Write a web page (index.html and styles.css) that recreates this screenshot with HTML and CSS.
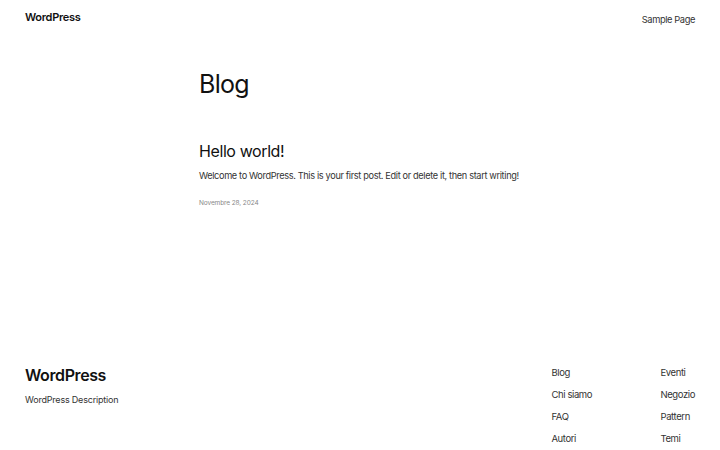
FILE: index.html
```html
<!DOCTYPE html>
<html lang="it">
<head>
  <meta charset="UTF-8">
  <meta name="viewport" content="width=device-width, initial-scale=1.0">
  <title>Blog – WordPress</title>
  <link rel="stylesheet" href="styles.css">
</head>
<body>

  <!-- Header -->
  <header class="site-header">
    <a class="site-title" href="#">WordPress</a>
    <nav class="site-nav">
      <a href="#">Sample Page</a>
    </nav>
  </header>

  <!-- Main -->
  <main class="site-main">
    <h1 class="page-title">Blog</h1>

    <article class="post">
      <h2 class="post-title"><a href="#">Hello world!</a></h2>
      <p class="post-excerpt">Welcome to WordPress. This is your first post. Edit or delete it, then start writing!</p>
      <div class="post-date">Novembre 28, 2024</div>
    </article>
  </main>

  <!-- Footer -->
  <footer class="site-footer">
    <div class="footer-brand">
      <a class="footer-title" href="#">WordPress</a>
      <p class="footer-desc">WordPress Description</p>
    </div>
    <div class="footer-links">
      <ul class="link-col">
        <li><a href="#">Blog</a></li>
        <li><a href="#">Chi siamo</a></li>
        <li><a href="#">FAQ</a></li>
        <li><a href="#">Autori</a></li>
      </ul>
      <ul class="link-col">
        <li><a href="#">Eventi</a></li>
        <li><a href="#">Negozio</a></li>
        <li><a href="#">Pattern</a></li>
        <li><a href="#">Temi</a></li>
      </ul>
    </div>
  </footer>

</body>
</html>
```

FILE: styles.css
```css
body {
  font-family: Inter, "Noto Sans", sans-serif;
  background-color: #ffffff;
  color: #111111;
  margin: 0;
  padding: 0;
  height: 450px;
  overflow: hidden;
  display: flex;
  flex-direction: column;
}

a {
  color: inherit;
  text-decoration: none;
}

/* Header */
.site-header {
  display: flex;
  justify-content: space-between;
  align-items: center;
  padding: 9px 25px 0 25px;
  height: 16px;
}

.site-title {
  font-size: 11px;
  font-weight: 600;
  letter-spacing: -0.3px;
}

.site-nav a {
  font-size: 9.3px;
  letter-spacing: -0.4px;
  color: #333;
}

/* Main */
.site-main {
  width: 322px;
  margin: 0 auto;
  padding-top: 42px;
  flex: 1;
}

.page-title {
  font-size: 25px;
  font-weight: 400;
  letter-spacing: -0.7px;
  margin: 0;
  line-height: 34px;
}

.post {
  margin-top: 39px;
}

.post-title {
  font-size: 16px;
  font-weight: 400;
  letter-spacing: -0.4px;
  margin: 0;
  line-height: 22px;
}

.post-excerpt {
  font-size: 9.2px;
  letter-spacing: -0.35px;
  white-space: nowrap;
  color: #333;
  margin: 7px 0 0 0;
  line-height: 14px;
}

.post-date {
  font-size: 6.5px;
  letter-spacing: -0.1px;
  color: #888;
  margin-top: 16px;
}

/* Footer */
.site-footer {
  display: flex;
  justify-content: space-between;
  padding: 0 25px;
  height: 100px;
}

.footer-title {
  display: block;
  font-size: 16px;
  font-weight: 600;
  letter-spacing: -0.4px;
  margin-top: 15px;
}

.footer-desc {
  font-size: 9px;
  letter-spacing: -0.2px;
  color: #333;
  margin: 9px 0 0 0;
}

.footer-links {
  display: grid;
  grid-template-columns: 109px auto;
  padding-top: 16px;
}

.link-col {
  list-style: none;
  margin: 0;
  padding: 0;
  display: flex;
  flex-direction: column;
  gap: 8px;
}

.link-col li {
  font-size: 9.5px;
  letter-spacing: -0.4px;
  white-space: nowrap;
  color: #333;
  line-height: 14px;
}
```
